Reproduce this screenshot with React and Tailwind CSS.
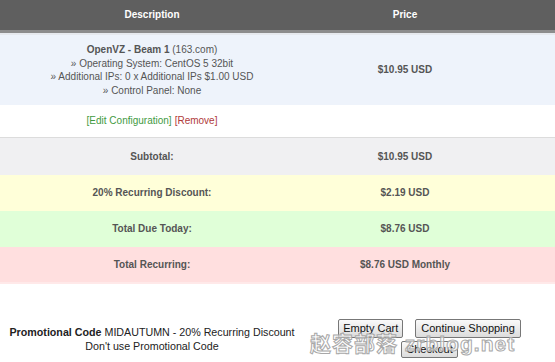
export default function App() {
  const font = { fontFamily: '"Liberation Sans", Arial, sans-serif' };
  return (
    <div className="relative w-[555px] h-[362px] bg-white overflow-hidden text-[10px] leading-[13.5px] text-[#555]" style={font}>
      {/* header */}
      <div className="flex h-[33px] bg-[#5f5f5f] border-b-[3px] border-[#8c8c8c] text-white font-bold text-[10px]">
        <div className="w-[304px] flex items-center justify-center">Description</div>
        <div className="w-[202px] flex items-center justify-center">Price</div>
      </div>
      <div className="h-[2px] bg-[#e6e9ee]" />
      {/* item */}
      <div className="flex h-[70px] bg-[#eef3fb]">
        <div className="w-[304px] flex flex-col items-center justify-center">
          <div><span className="font-bold">OpenVZ - Beam 1</span> (163.com)</div>
          <div>» Operating System: CentOS 5 32bit</div>
          <div>» Additional IPs: 0 x Additional IPs $1.00 USD</div>
          <div>» Control Panel: None</div>
        </div>
        <div className="w-[202px] flex items-center justify-center font-bold">$10.95 USD</div>
      </div>
      <div className="flex h-[33px] bg-white border-b border-[#dcdcdc]">
        <div className="w-[304px] flex items-center justify-center">
          <span className="text-[#3f9a3f]">[Edit Configuration]</span>
          <span className="ml-[3px] text-[#b03a3a]">[Remove]</span>
        </div>
      </div>
      {[
        ["Subtotal:", "$10.95 USD", "bg-[#f0f0f2]", "h-[37px]"],
        ["20% Recurring Discount:", "$2.19 USD", "bg-[#ffffd9]", "h-[36px]"],
        ["Total Due Today:", "$8.76 USD", "bg-[#e0ffd8]", "h-[36px]"],
        ["Total Recurring:", "$8.76 USD Monthly", "bg-[#ffdfdf]", "h-[35px]"],
      ].map(([a, b, bg, h]) => (
        <div key={a} className={`flex font-bold ${bg} ${h}`}>
          <div className="w-[304px] flex items-center justify-center">{a}</div>
          <div className="w-[202px] flex items-center justify-center">{b}</div>
        </div>
      ))}
      <div className="h-[2px] bg-[#ffe9e9]" />
      {/* bottom */}
      <div className="flex pt-[35px]">
        <div className="w-[304px] flex flex-col items-center pt-[6px] text-[#222] text-[10.7px] leading-[14px]">
          <div><span className="font-bold">Promotional Code</span> MIDAUTUMN - 20% Recurring Discount</div>
          <div>Don't use Promotional Code</div>
        </div>
        <div className="w-[251px] flex flex-col items-center gap-[3px]">
          <div className="flex gap-[12px]">
            <button className="h-[19px] px-[4px] text-[11px] text-[#111] border border-[#777] rounded-[2px] bg-gradient-to-b from-[#fafafa] to-[#dcdcdc]">Empty Cart</button>
            <button className="h-[19px] px-[5px] text-[11px] text-[#111] border border-[#777] rounded-[2px] bg-gradient-to-b from-[#fafafa] to-[#dcdcdc]">Continue Shopping</button>
          </div>
          <button className="h-[17px] px-[4px] text-[11px] text-[#111] border border-[#777] rounded-[2px] bg-gradient-to-b from-[#fafafa] to-[#dcdcdc]">Checkout</button>
        </div>
      </div>
      {/* watermark */}
      <div className="absolute left-[310px] top-[337px] text-[21px] font-bold text-white/60 [-webkit-text-stroke:1px_#a8a8a8] tracking-[1px] pointer-events-none" style={{ fontFamily: '"Liberation Sans", "Noto Sans CJK SC", sans-serif' }}>
        赵容部落 zrblog.net
      </div>
    </div>
  );
}
